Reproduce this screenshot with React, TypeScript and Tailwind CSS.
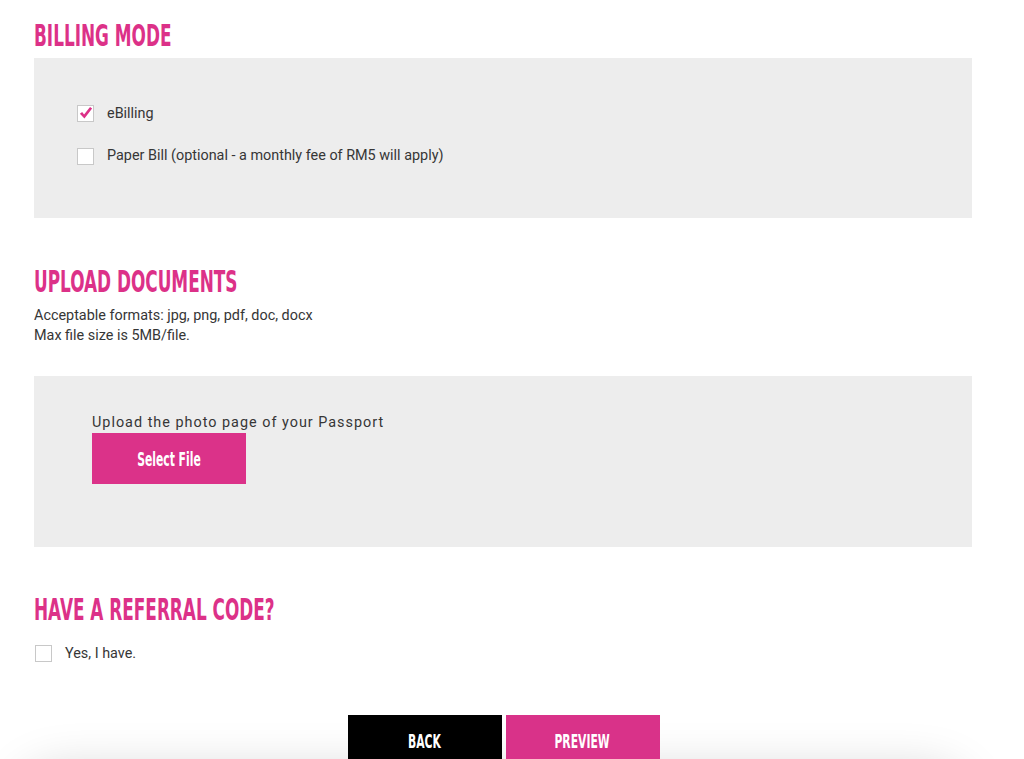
import React from "react"

const condensed = "[font-family:'DejaVu_Sans_Condensed','Liberation_Sans',sans-serif]"
const heading = `inline-block origin-left scale-x-[0.605] text-[31px] leading-none font-bold uppercase whitespace-nowrap text-[#dc3188] ${condensed}`

function Checkbox({ checked = false }: { checked?: boolean }) {
  return (
    <span className="w-[17px] h-[17px] shrink-0 bg-white border border-[#c8c8c8] flex items-center justify-center">
      {checked && (
        <svg viewBox="0 0 16 16" className="w-[14px] h-[14px]">
          <path d="M1 8.8 L3.6 6.8 L5.8 9.6 L12.6 1.2 L15 2.8 L6.2 14.2 Z" fill="#dc3188" />
        </svg>
      )}
    </span>
  )
}

function ButtonLabel({ children }: { children: React.ReactNode }) {
  return <span className="inline-block scale-x-[0.6] whitespace-nowrap">{children}</span>
}

export default function App() {
  return (
    <div className="relative w-[1007px] min-h-[820px] bg-white text-[#363636] text-[14.4px] [font-family:Roboto,'Liberation_Sans',sans-serif] overflow-hidden">
      <div className="pl-[34px] pr-[35px]">
        <div className="pt-[20px]">
          <h2 className={heading}>Billing Mode</h2>
        </div>

        <section className="mt-[5px] h-[160px] bg-[#ededed] pl-[43px] pt-[45px] flex flex-col gap-[21px]">
          <label className="flex items-center gap-[13px]">
            <Checkbox checked />
            <span>eBilling</span>
          </label>
          <label className="flex items-center gap-[13px]">
            <Checkbox />
            <span>Paper Bill (optional - a monthly fee of RM5 will apply)</span>
          </label>
        </section>

        <div className="mt-[48px]">
          <h2 className={heading}>Upload Documents</h2>
        </div>
        <div className="mt-[8px] leading-[20px]">
          <p>Acceptable formats: jpg, png, pdf, doc, docx</p>
          <p>Max file size is 5MB/file.</p>
        </div>

        <section className="mt-[30px] h-[171px] bg-[#ededed] pl-[58px] pt-[37px]">
          <p className="tracking-[1px] leading-[20px]">Upload the photo page of your Passport</p>
          <button className={`w-[154px] h-[51px] bg-[#db3289] text-white text-[20px] font-bold ${condensed}`}>
            <ButtonLabel>Select File</ButtonLabel>
          </button>
        </section>

        <div className="mt-[47px]">
          <h2 className={heading}>Have a Referral Code?</h2>
        </div>
        <label className="mt-[16px] flex items-center gap-[13px] pl-[1px]">
          <Checkbox />
          <span>Yes, I have.</span>
        </label>
      </div>

      <div className="relative mt-[51px] h-[80px]">
        <div className="absolute left-[20px] right-[40px] top-[56px] h-[80px] rounded-[60px] shadow-[0_0_50px_rgba(0,0,0,0.18)] bg-[#eeeeee]" />
        <div className="relative flex justify-center gap-[4px]">
          <button className={`w-[154px] h-[51px] bg-black text-white text-[20px] font-bold uppercase ${condensed}`}>
            <ButtonLabel>Back</ButtonLabel>
          </button>
          <button className={`w-[154px] h-[51px] bg-[#d93289] text-white text-[20px] font-bold uppercase ${condensed}`}>
            <ButtonLabel>Preview</ButtonLabel>
          </button>
        </div>
      </div>
    </div>
  )
}
